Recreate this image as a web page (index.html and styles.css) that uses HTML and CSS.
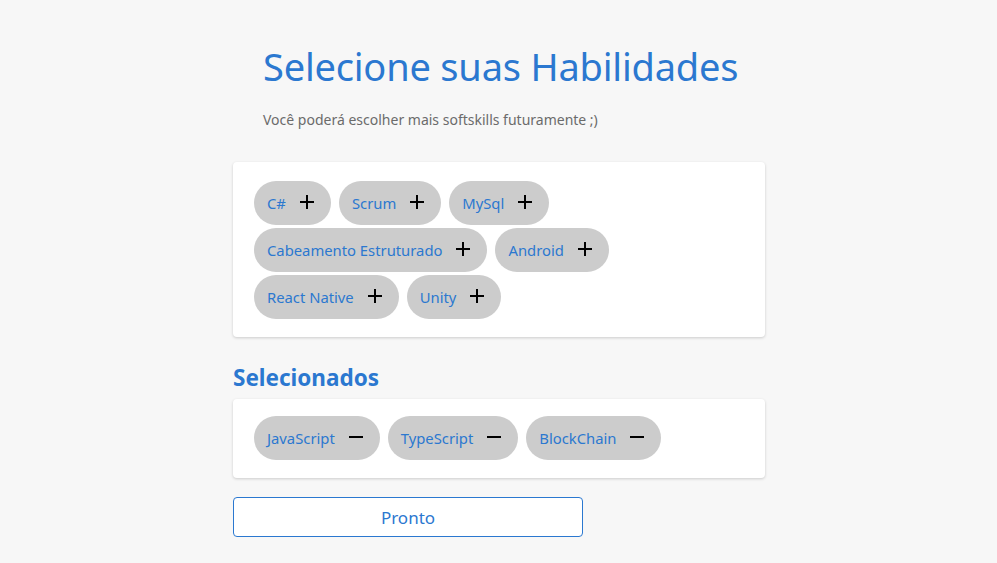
FILE: index.html
```html
<!DOCTYPE html>
<html lang="pt-BR">
<head>
<meta charset="utf-8">
<title>Selecione suas Habilidades</title>
<link rel="stylesheet" href="styles.css">
</head>
<body>
<main class="page">
  <header class="intro">
    <h1 class="title">Selecione suas Habilidades</h1>
    <p class="subtitle">Você poderá escolher mais softskills futuramente ;)</p>
  </header>

  <section class="card">
    <div class="chips">
      <button class="chip"><span class="chip-label">C#</span><svg class="chip-icon" viewBox="0 0 14 14"><path d="M7 0V14M0 7H14"/></svg></button>
      <button class="chip"><span class="chip-label">Scrum</span><svg class="chip-icon" viewBox="0 0 14 14"><path d="M7 0V14M0 7H14"/></svg></button>
      <button class="chip"><span class="chip-label">MySql</span><svg class="chip-icon" viewBox="0 0 14 14"><path d="M7 0V14M0 7H14"/></svg></button>
      <button class="chip"><span class="chip-label">Cabeamento Estruturado</span><svg class="chip-icon" viewBox="0 0 14 14"><path d="M7 0V14M0 7H14"/></svg></button>
      <button class="chip"><span class="chip-label">Android</span><svg class="chip-icon" viewBox="0 0 14 14"><path d="M7 0V14M0 7H14"/></svg></button>
      <button class="chip"><span class="chip-label">React Native</span><svg class="chip-icon" viewBox="0 0 14 14"><path d="M7 0V14M0 7H14"/></svg></button>
      <button class="chip"><span class="chip-label">Unity</span><svg class="chip-icon" viewBox="0 0 14 14"><path d="M7 0V14M0 7H14"/></svg></button>
    </div>
  </section>

  <h2 class="section-title">Selecionados</h2>

  <section class="card card-selected">
    <div class="chips">
      <button class="chip"><span class="chip-label">JavaScript</span><svg class="chip-icon" viewBox="0 0 14 14"><path d="M0 7H14"/></svg></button>
      <button class="chip"><span class="chip-label">TypeScript</span><svg class="chip-icon" viewBox="0 0 14 14"><path d="M0 7H14"/></svg></button>
      <button class="chip"><span class="chip-label">BlockChain</span><svg class="chip-icon" viewBox="0 0 14 14"><path d="M0 7H14"/></svg></button>
    </div>
  </section>

  <button class="done">Pronto</button>
</main>
</body>
</html>
```

FILE: styles.css
```css
* { box-sizing: border-box; }

html, body {
  margin: 0;
  padding: 0;
  background: #f7f7f7;
}

body {
  font-family: "Noto Sans", "Open Sans", "Liberation Sans", sans-serif;
  color: #2b78d0;
}

.page {
  width: 533px;
  margin: 0 auto;
  padding: 40px 0 0 1px;
  display: flex;
  flex-direction: column;
  align-items: stretch;
}

.intro {
  padding-left: 30px;
}

.title {
  margin: 0;
  font-size: 38px;
  font-weight: 400;
  line-height: 52px;
  color: #2b78d0;
  letter-spacing: -0.2px;
}

.subtitle {
  margin: 18px 0 0;
  font-size: 14px;
  line-height: 20px;
  color: #6b6b6b;
}

.card {
  margin-top: 32px;
  background: #fff;
  border-radius: 4px;
  box-shadow: 0 1px 3px rgba(0, 0, 0, 0.18);
  padding: 19px 21px 18px;
}

.chips {
  display: flex;
  flex-wrap: wrap;
  gap: 3px 8px;
}

.chip {
  display: inline-flex;
  align-items: center;
  height: 44px;
  padding: 0 17px 0 13px;
  border: none;
  border-radius: 22px;
  background: #cccccc;
  font-family: inherit;
  font-size: 14.8px;
  color: #2b78d0;
  cursor: pointer;
}

.chip-label {
  line-height: 20px;
  padding-top: 0;
}

.chip-icon {
  width: 14px;
  height: 14px;
  margin-left: 14px;
  margin-top: -2px;
  stroke: #000;
  stroke-width: 2;
  fill: none;
}

.section-title {
  margin: 26px 0 0;
  font-size: 22.5px;
  font-weight: 700;
  line-height: 30px;
  color: #2b78d0;
}

.card-selected {
  margin-top: 6px;
  padding-top: 17px;
}

.done {
  margin-top: 19px;
  width: 350px;
  height: 40px;
  background: #fff;
  border: 1px solid #2b78d0;
  border-radius: 4px;
  font-family: inherit;
  font-size: 17px;
  color: #2b78d0;
  cursor: pointer;
}
```
